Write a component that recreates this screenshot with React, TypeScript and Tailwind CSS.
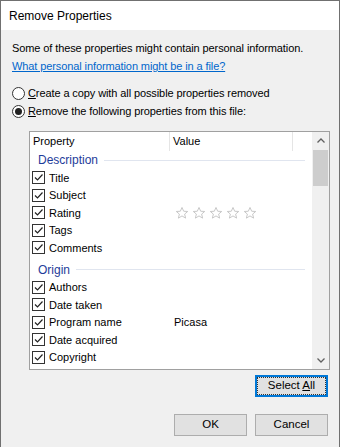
const font = { fontFamily: '"Liberation Sans", Arial, sans-serif' }

type Row = { label: string; value?: string; stars?: boolean }

const groups: { name: string; rows: Row[] }[] = [
  {
    name: "Description",
    rows: [
      { label: "Title" },
      { label: "Subject" },
      { label: "Rating", stars: true },
      { label: "Tags" },
      { label: "Comments" },
    ],
  },
  {
    name: "Origin",
    rows: [
      { label: "Authors" },
      { label: "Date taken" },
      { label: "Program name", value: "Picasa" },
      { label: "Date acquired" },
      { label: "Copyright" },
    ],
  },
]

function Check() {
  return (
    <span className="w-[13px] h-[13px] border border-[#333] bg-white flex items-center justify-center shrink-0">
      <svg width="11" height="11" viewBox="0 0 11 11">
        <path d="M2 5.5 L4.5 8 L9.5 2.5" fill="none" stroke="#222" strokeWidth="1.2" />
      </svg>
    </span>
  )
}

function Star() {
  return (
    <svg width="14" height="14" viewBox="0 0 24 24">
      <path
        d="M12 2.5 L14.9 9 L21.8 9.4 L16.5 13.9 L18.2 20.8 L12 17 L5.8 20.8 L7.5 13.9 L2.2 9.4 L9.1 9 Z"
        fill="none"
        stroke="#c4c4c4"
        strokeWidth="1.6"
        strokeLinejoin="round"
      />
    </svg>
  )
}

function Radio({ on }: { on?: boolean }) {
  return (
    <span className="w-[13px] h-[13px] rounded-full border border-[#333] bg-white flex items-center justify-center shrink-0">
      {on && <span className="w-[7px] h-[7px] rounded-full bg-[#222]" />}
    </span>
  )
}

function Btn({ children, focused }: { children: React.ReactNode; focused?: boolean }) {
  return (
    <div
      className={
        "w-[73px] h-[22px] bg-[#e1e1e1] flex items-center justify-center text-[11.5px] text-black " +
        (focused ? "border-2 border-[#0078d7]" : "border border-[#adadad]")
      }
    >
      {focused ? (
        <span className="w-full h-full border border-dotted border-[#333] flex items-center justify-center">
          {children}
        </span>
      ) : (
        children
      )}
    </div>
  )
}

export default function App() {
  return (
    <div style={font} className="w-[340px] h-[447px] border-l border-r border-t border-[#707070] bg-[#f0f0f0] flex flex-col text-[11px] text-black overflow-hidden whitespace-nowrap">
      <div className="h-[29px] bg-white flex items-center pl-[8px] text-[12px]">Remove Properties</div>
      <div className="flex flex-col pl-[11px] pt-[10px] tracking-[-0.1px]">
        <div className="h-[17px] flex items-center">Some of these properties might contain personal information.</div>
        <div className="h-[18px] flex items-center text-[#0066cc] underline">What personal information might be in a file?</div>
        <div className="h-[9px]" />
        <div className="h-[18px] flex items-center gap-[3px]">
          <Radio />
          <span><u>C</u>reate a copy with all possible properties removed</span>
        </div>
        <div className="h-[18px] flex items-center gap-[3px]">
          <Radio on />
          <span><u>R</u>emove the following properties from this file:</span>
        </div>
      </div>
      <div className="h-[11px]" />
      <div className="ml-[28px] w-[301px] h-[239px] border border-[#a0a0a0] bg-white flex">
        <div className="flex-1 flex flex-col">
          <div className="h-[19px] flex items-center">
            <div className="w-[140px] h-full flex items-center pl-[3px] border-r border-[#e5e5e5]">Property</div>
            <div className="w-[123px] h-full flex items-center pl-[3px] border-r border-[#e5e5e5]">Value</div>
          </div>
          {groups.map((g, gi) => (
            <div key={g.name} className="flex flex-col">
              <div className={"flex items-center pr-[7px] " + (gi > 0 ? "h-[22px] pt-[4px]" : "h-[18px]")}>
                <span className="pl-[8px] text-[12px] text-[#1e3c9a]">{g.name}</span>
                <span className="flex-1 ml-[6px] h-px bg-[#e0e5ef]" />
              </div>
              {g.rows.map((r) => (
                <div key={r.label} className="h-[17.5px] flex items-center">
                  <div className="w-[140px] flex items-center gap-[4px] pl-[2px]">
                    <Check />
                    <span>{r.label}</span>
                  </div>
                  <div className="flex items-center pl-[4px]">
                    {r.value}
                    {r.stars && (
                      <span className="flex gap-[3px] pl-[1px]">
                        <Star />
                        <Star />
                        <Star />
                        <Star />
                        <Star />
                      </span>
                    )}
                  </div>
                </div>
              ))}
            </div>
          ))}
        </div>
        <div className="w-[17px] bg-[#f0f0f0] flex flex-col">
          <div className="h-[17px] flex items-center justify-center">
            <svg width="8" height="5" viewBox="0 0 8 5">
              <path d="M0.5 4.5 L4 1 L7.5 4.5" fill="none" stroke="#606060" strokeWidth="1.3" />
            </svg>
          </div>
          <div className="h-[36px] mt-[1px] mx-[1px] bg-[#cdcdcd]" />
          <div className="flex-1" />
          <div className="h-[17px] flex items-center justify-center">
            <svg width="8" height="5" viewBox="0 0 8 5">
              <path d="M0.5 0.5 L4 4 L7.5 0.5" fill="none" stroke="#606060" strokeWidth="1.3" />
            </svg>
          </div>
        </div>
      </div>
      <div className="flex justify-end pr-[11px] pt-[5px]">
        <Btn focused>
          <span>Select <u>A</u>ll</span>
        </Btn>
      </div>
      <div className="flex justify-end gap-[8px] pr-[11px] pt-[17px]">
        <Btn>OK</Btn>
        <Btn>Cancel</Btn>
      </div>
    </div>
  )
}
